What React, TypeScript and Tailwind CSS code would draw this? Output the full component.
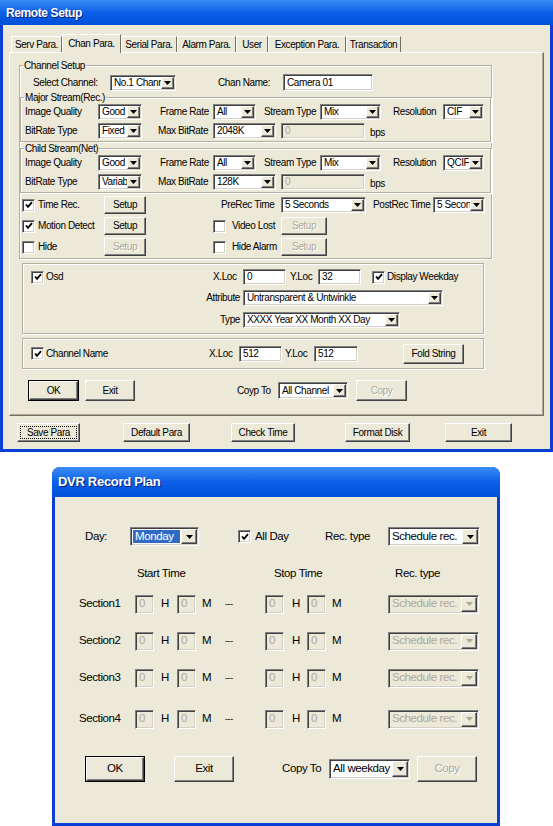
import React from 'react';

const sunken =
  'border border-t-[#808080] border-l-[#808080] border-b-white border-r-white shadow-[inset_1px_1px_0_#404040,inset_-1px_-1px_0_#D4D0C8]';
const raised =
  'border border-t-white border-l-white border-b-[#404040] border-r-[#404040] shadow-[inset_-1px_-1px_0_#808080]';
const etched = 'border border-[#B3B0A2] shadow-[inset_1px_1px_0_#fff,1px_1px_0_#fff]';
const grayText = 'text-[#ACA899] [text-shadow:1px_1px_0_#fff]';

function Lbl({ children, className = '' }: { children?: React.ReactNode; className?: string }) {
  return <span className={`shrink-0 whitespace-nowrap ${className}`}>{children}</span>;
}

function Btn({
  children,
  className = '',
  disabled = false,
  isDefault = false,
  focus = false,
}: {
  children: React.ReactNode;
  className?: string;
  disabled?: boolean;
  isDefault?: boolean;
  focus?: boolean;
}) {
  const inner = (
    <div
      className={`h-full w-full flex items-center justify-center whitespace-nowrap bg-[#ECE9D8] ${raised} ${
        disabled ? grayText : 'text-black'
      } ${focus ? '[outline:1px_dotted_#000] [outline-offset:-4px]' : ''}`}
    >
      {children}
    </div>
  );
  return <div className={`shrink-0 ${isDefault ? 'border border-black' : ''} ${className}`}>{inner}</div>;
}

function Select({
  value,
  className = '',
  disabled = false,
  hl = false,
  arrow = 'w-[13px]',
}: {
  value: string;
  className?: string;
  disabled?: boolean;
  hl?: boolean;
  arrow?: string;
}) {
  return (
    <div className={`shrink-0 flex p-px ${sunken} ${disabled ? 'bg-[#ECE9D8]' : 'bg-white'} ${className}`}>
      <div
        className={`flex-1 min-w-0 flex items-center overflow-hidden ${
          hl ? 'bg-[#316AC5] text-white m-px pl-[2px]' : 'pl-[2px]'
        } ${disabled ? 'text-[#ACA899]' : ''}`}
      >
        <span className="whitespace-nowrap">{value}</span>
      </div>
      <div className={`${arrow} shrink-0 flex items-center justify-center bg-[#ECE9D8] ${raised}`}>
        <svg width="7" height="4" viewBox="0 0 7 4">
          <path d="M0 0h7L3.5 4z" fill={disabled ? '#ACA899' : '#000'} />
        </svg>
      </div>
    </div>
  );
}

function Input({ value = '', className = '', disabled = false }: { value?: string; className?: string; disabled?: boolean }) {
  return (
    <div
      className={`shrink-0 flex items-center pl-[3px] overflow-hidden whitespace-nowrap ${sunken} ${
        disabled ? 'bg-[#ECE9D8] text-[#ACA899]' : 'bg-white'
      } ${className}`}
    >
      {value}
    </div>
  );
}

function Check({ checked = false, className = '' }: { checked?: boolean; className?: string }) {
  return (
    <div className={`w-[13px] h-[13px] shrink-0 bg-white flex items-center justify-center ${sunken} ${className}`}>
      {checked && (
        <svg width="8" height="8" viewBox="0 0 8 8">
          <polyline points="1,3.5 3,5.8 7,1.2" fill="none" stroke="#000" strokeWidth="1.8" />
        </svg>
      )}
    </div>
  );
}

function TitleBar({ title, className = '', text = '' }: { title: string; className?: string; text?: string }) {
  return (
    <div
      className={`shrink-0 flex items-center pl-[6px] bg-linear-to-b from-[#3A8CF7] via-[#0B5FE6] to-[#0050D8] ${className}`}
    >
      <span className={`text-white font-bold whitespace-nowrap [text-shadow:1px_1px_0_#0A1F7A] ${text}`}>{title}</span>
    </div>
  );
}

const tabs = [
  { name: 'Serv Para.', w: 'w-[51px]' },
  { name: 'Chan Para.', w: 'w-[59px]', active: true },
  { name: 'Serial Para.', w: 'w-[56px]' },
  { name: 'Alarm Para.', w: 'w-[59px]' },
  { name: 'User', w: 'w-[32px]' },
  { name: 'Exception Para.', w: 'w-[78px]' },
  { name: 'Transaction', w: 'w-[55px]' },
];

function StreamBox({ legend, res, bitType, maxBit }: { legend: string; res: string; bitType: string; maxBit: string }) {
  return (
    <fieldset className={`${etched} pb-[2px]`}>
      <legend className="ml-[3px] px-px leading-[13px] bg-[#ECE9D8]">{legend}</legend>
      <div className="flex items-center h-[16px] pl-[4px]">
        <Lbl className="w-[73px]">Image Quality</Lbl>
        <Select className="w-[44px] h-[16px]" value="Good" />
        <Lbl className="ml-[18px] w-[53px]">Frame Rate</Lbl>
        <Select className="w-[43px] h-[16px]" value="All" />
        <Lbl className="ml-[8px] w-[56px]">Stream Type</Lbl>
        <Select className="w-[61px] h-[16px]" value="Mix" />
        <Lbl className="ml-[12px] w-[50px]">Resolution</Lbl>
        <Select className="w-[41px] h-[16px]" value={res} />
      </div>
      <div className="flex items-center h-[16px] mt-[3px] pl-[4px]">
        <Lbl className="w-[73px]">BitRate Type</Lbl>
        <Select className="w-[44px] h-[16px]" value={bitType} />
        <Lbl className="ml-[16px] w-[55px]">Max BitRate</Lbl>
        <Select className="w-[63px] h-[16px]" value={maxBit} />
        <Input className="ml-[5px] w-[84px] h-[16px]" value="0" disabled />
        <Lbl className="ml-[5px] mt-[4px]">bps</Lbl>
      </div>
    </fieldset>
  );
}

function RemoteSetup() {
  return (
    <div className="w-[553px] h-[452px] bg-[#0A3FD6] flex flex-col shrink-0">
      <TitleBar title="Remote Setup" className="h-[25px]" text="text-[12px] tracking-[-0.4px]" />
      <div className="mx-[3px] mb-[3px] flex-1 bg-[#ECE9D8] pt-[9px] px-[6px] text-[10px] tracking-[-0.4px] leading-none">
        {/* tabs */}
        <div className="flex items-end h-[18px] pl-[2px]">
          {tabs.map((t) => (
            <div
              key={t.name}
              className={`${t.w} shrink-0 flex items-center justify-center whitespace-nowrap border-t border-l border-r border-t-white border-l-white border-r-[#716F64] bg-[#ECE9D8] ${
                t.active ? 'h-[19px] relative z-10 -mb-px' : 'h-[16px]'
              }`}
            >
              {t.name}
            </div>
          ))}
        </div>

        {/* panel */}
        <div className="h-[364px] border border-t-white border-l-white border-r-[#716F64] border-b-[#716F64] shadow-[inset_-1px_-1px_0_#ACA899] pl-[9px] pt-[6px] flex flex-col">
          <fieldset className={`w-[473px] ${etched} pb-[2px]`}>
            <legend className="ml-[3px] px-px leading-[13px] bg-[#ECE9D8]">Channel Setup</legend>
            <div className="flex items-center h-[17px] mt-[2px] pl-[13px]">
              <Lbl className="w-[77px]">Select Channel:</Lbl>
              <Select className="w-[66px] h-[16px]" value="No.1 Channel" />
              <Lbl className="ml-[42px] w-[65px]">Chan Name:</Lbl>
              <Input className="w-[90px] h-[17px]" value="Camera 01" />
            </div>
            <StreamBox legend="Major Stream(Rec.)" res="CIF" bitType="Fixed" maxBit="2048K" />
            <StreamBox legend="Child Stream(Net)" res="QCIF" bitType="Variable" maxBit="128K" />

            <div className="flex items-center h-[18px] mt-[3px] pl-[2px]">
              <Check checked />
              <Lbl className="ml-[3px] w-[66px]">Time Rec.</Lbl>
              <Btn className="w-[42px] h-[18px]">Setup</Btn>
              <Lbl className="ml-[75px] w-[60px]">PreRec Time</Lbl>
              <Select className="w-[85px] h-[16px]" value="5 Seconds" />
              <Lbl className="ml-[7px] w-[60px]">PostRec Time</Lbl>
              <Select className="w-[52px] h-[16px]" value="5 Seconds" />
            </div>
            <div className="flex items-center h-[18px] mt-[3px] pl-[2px]">
              <Check checked />
              <Lbl className="ml-[3px] w-[66px]">Motion Detect</Lbl>
              <Btn className="w-[42px] h-[18px]">Setup</Btn>
              <Check className="ml-[67px]" />
              <Lbl className="ml-[6px] w-[49px]">Video Lost</Lbl>
              <Btn className="w-[46px] h-[18px]" disabled>
                Setup
              </Btn>
            </div>
            <div className="flex items-center h-[18px] mt-[3px] pl-[2px]">
              <Check />
              <Lbl className="ml-[3px] w-[66px]">Hide</Lbl>
              <Btn className="w-[42px] h-[18px]" disabled>
                Setup
              </Btn>
              <Check className="ml-[67px]" />
              <Lbl className="ml-[6px] w-[49px]">Hide Alarm</Lbl>
              <Btn className="w-[46px] h-[18px]" disabled>
                Setup
              </Btn>
            </div>
          </fieldset>

          {/* OSD */}
          <div className={`ml-[3px] mt-[4px] w-[462px] h-[71px] ${etched} flex flex-col pt-[5px]`}>
            <div className="flex items-center h-[16px]">
              <div className="w-[190px] shrink-0 flex items-center pl-[8px]">
                <Check checked />
                <Lbl className="ml-[2px]">Osd</Lbl>
              </div>
              <Lbl className="w-[30px]">X.Loc</Lbl>
              <Input className="w-[43px] h-[16px]" value="0" />
              <Lbl className="w-[32px] pl-[4px]">Y.Loc</Lbl>
              <Input className="w-[43px] h-[16px]" value="32" />
              <Check checked className="ml-[11px]" />
              <Lbl className="ml-[2px]">Display Weekday</Lbl>
            </div>
            <div className="flex items-center h-[16px] mt-[5px]">
              <Lbl className="w-[220px] text-right pr-[3px]">Attribute</Lbl>
              <Select className="w-[200px] h-[16px]" value="Untransparent & Untwinkle" />
            </div>
            <div className="flex items-center h-[16px] mt-[6px]">
              <Lbl className="w-[220px] text-right pr-[3px]">Type</Lbl>
              <Select className="w-[157px] h-[16px]" value="XXXX Year XX Month XX Day" />
            </div>
          </div>

          {/* Channel name */}
          <div className={`ml-[3px] mt-[4px] w-[462px] h-[31px] ${etched} flex items-center`}>
            <div className="w-[186px] shrink-0 flex items-center pl-[8px]">
              <Check checked />
              <Lbl className="ml-[2px]">Channel Name</Lbl>
            </div>
            <Lbl className="w-[30px]">X.Loc</Lbl>
            <Input className="w-[43px] h-[16px]" value="512" />
            <Lbl className="w-[32px] pl-[3px]">Y.Loc</Lbl>
            <Input className="w-[44px] h-[16px]" value="512" />
            <Btn className="ml-[45px] w-[61px] h-[20px]">Fold String</Btn>
          </div>

          <div className="flex items-center h-[21px] mt-[11px] pl-[9px]">
            <Btn isDefault className="w-[51px] h-[21px]">
              OK
            </Btn>
            <Btn className="ml-[6px] w-[50px] h-[21px]">Exit</Btn>
            <Lbl className="ml-[102px] w-[41px]">Coyp To</Lbl>
            <Select className="w-[70px] h-[17px]" value="All Channel" />
            <Btn disabled className="ml-[8px] w-[51px] h-[21px]">
              Copy
            </Btn>
          </div>
        </div>

        {/* bottom buttons */}
        <div className="flex items-center h-[19px] mt-[7px] pl-[8px]">
          <Btn focus className="w-[63px] h-[19px]">
            Save Para
          </Btn>
          <Btn className="ml-[43px] w-[67px] h-[19px]">Default Para</Btn>
          <Btn className="ml-[41px] w-[64px] h-[19px]">Check Time</Btn>
          <Btn className="ml-[50px] w-[65px] h-[19px]">Format Disk</Btn>
          <Btn className="ml-[35px] w-[67px] h-[19px]">Exit</Btn>
        </div>
      </div>
    </div>
  );
}

function SectionRow({ name, className = '' }: { name: string; className?: string }) {
  return (
    <div className={`flex items-center h-[20px] pl-[24px] ${className}`}>
      <Lbl className="w-[56px]">{name}</Lbl>
      <Input className="w-[19px] h-[19px]" value="0" disabled />
      <Lbl className="w-[23px] pl-[7px]">H</Lbl>
      <Input className="w-[19px] h-[19px]" value="0" disabled />
      <Lbl className="w-[29px] pl-[6px]">M</Lbl>
      <Lbl className="w-[40px] text-[9px]">---</Lbl>
      <Input className="w-[19px] h-[19px]" value="0" disabled />
      <Lbl className="w-[23px] pl-[8px]">H</Lbl>
      <Input className="w-[19px] h-[19px]" value="0" disabled />
      <Lbl className="w-[62px] pl-[6px]">M</Lbl>
      <Select className="w-[91px] h-[19px]" value="Schedule rec." disabled arrow="w-[16px]" />
    </div>
  );
}

function RecordPlan() {
  return (
    <div className="ml-[52px] mt-[15px] w-[448px] h-[359px] bg-[#0A3FD6] rounded-t-[8px] overflow-hidden flex flex-col shrink-0">
      <TitleBar title="DVR Record Plan" className="h-[30px]" text="text-[13px] tracking-[-0.3px]" />
      <div className="mx-[3px] mb-[3px] flex-1 bg-[#ECE9D8] pt-[30px] text-[11.5px] tracking-[-0.4px] leading-none">
        <div className="flex items-center h-[19px] pl-[30px]">
          <Lbl className="w-[45px]">Day:</Lbl>
          <Select className="w-[69px] h-[19px]" value="Monday" hl arrow="w-[16px]" />
          <Check checked className="ml-[39px]" />
          <Lbl className="ml-[4px] w-[70px]">All Day</Lbl>
          <Lbl className="w-[63px]">Rec. type</Lbl>
          <Select className="w-[92px] h-[19px]" value="Schedule rec." arrow="w-[16px]" />
        </div>
        <div className="flex items-center h-[15px] mt-[20px] pl-[82px]">
          <Lbl className="w-[137px]">Start Time</Lbl>
          <Lbl className="w-[121px]">Stop Time</Lbl>
          <Lbl>Rec. type</Lbl>
        </div>
        <SectionRow name="Section1" className="mt-[13px]" />
        <SectionRow name="Section2" className="mt-[17px]" />
        <SectionRow name="Section3" className="mt-[17px]" />
        <SectionRow name="Section4" className="mt-[21px]" />
        <div className="flex items-center h-[26px] mt-[27px] pl-[30px]">
          <Btn isDefault className="w-[60px] h-[26px]">
            OK
          </Btn>
          <Btn className="ml-[29px] w-[60px] h-[26px]">Exit</Btn>
          <Lbl className="ml-[48px] w-[47px]">Copy To</Lbl>
          <Select className="w-[81px] h-[20px]" value="All weekday" arrow="w-[16px]" />
          <Btn disabled className="ml-[7px] w-[60px] h-[26px]">
            Copy
          </Btn>
        </div>
      </div>
    </div>
  );
}

export default function App() {
  return (
    <div className="w-[553px] h-[826px] bg-white overflow-hidden flex flex-col font-['Liberation_Sans',Arial,sans-serif] text-black">
      <RemoteSetup />
      <RecordPlan />
    </div>
  );
}
